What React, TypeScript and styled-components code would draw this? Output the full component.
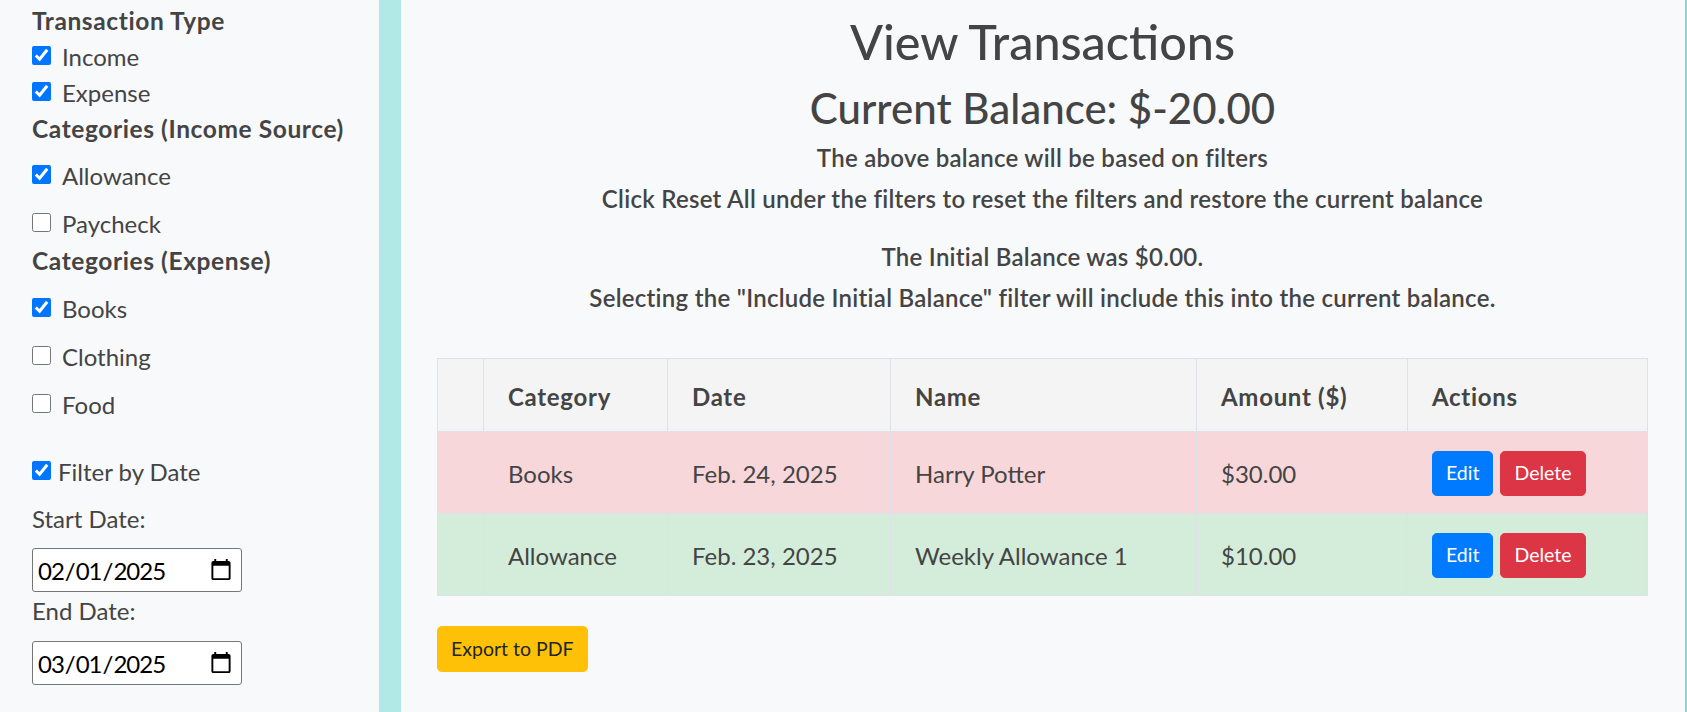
import React from "react";
import styled, { createGlobalStyle } from "styled-components";

const GlobalStyle = createGlobalStyle`
  html, body { margin: 0; padding: 0; }
  body {
    background: #b1e8e5;
    font-family: Lato, "Open Sans", sans-serif;
    color: #444;
  }
  * { box-sizing: border-box; }
`;

const Page = styled.div`
  display: flex;
  gap: 22px;
  height: 712px;
  overflow: hidden;
  padding-right: 3px;
  background: linear-gradient(to right, #b2e9e6 0%, #b0e8e5 40%, #84dad9 100%);
`;

const Sidebar = styled.aside`
  width: 379px;
  flex: none;
  background: #f8f9fa;
  padding-left: 32px;
  display: flex;
  flex-direction: column;
`;

const GroupTitle = styled.div<{ $h: number; $mt?: number }>`
  height: ${(p) => p.$h}px;
  margin-top: ${(p) => p.$mt ?? 0}px;
  display: flex;
  align-items: center;
  font-size: 24.5px;
  line-height: 28.8px;
  font-weight: 700;
  letter-spacing: 0.6px;
  white-space: nowrap;
  color: #444;
`;

const CheckRow = styled.label<{ $h: number; $mt?: number; $gap?: number }>`
  height: ${(p) => p.$h}px;
  margin-top: ${(p) => p.$mt ?? 0}px;
  display: flex;
  align-items: center;
  gap: ${(p) => p.$gap ?? 11}px;
  font-size: 24px;
  line-height: 28.8px;
  color: #444;
`;

const Box = styled.input.attrs({ type: "checkbox" })`
  width: 19px;
  height: 19px;
  margin: -3px 0 0 0;
  flex: none;
`;

const FieldLabel = styled.div<{ $h: number }>`
  height: ${(p) => p.$h}px;
  display: flex;
  align-items: center;
  font-size: 24px;
  line-height: 28.8px;
  color: #444;
`;

const DateField = styled.input.attrs({ type: "date" })<{ $mt: number }>`
  width: 210px;
  height: 44px;
  margin-top: ${(p) => p.$mt}px;
  border: 1px solid #767676;
  border-radius: 3px;
  background: #fff;
  color: #000;
  padding: 0 6px 0 4px;
  font-family: Lato, "Open Sans", sans-serif;
  font-size: 24px;
  letter-spacing: -1px;
  flex: none;
`;

const Main = styled.main`
  flex: 1;
  background: #f8f9fa;
  padding: 0 37px 0 36px;
  text-align: center;
`;

const Title = styled.h1`
  margin: 12.6px 0 14px;
  font-size: 48.5px;
  line-height: 57.6px;
  font-weight: 500;
  color: #444;
`;

const Balance = styled.h2`
  margin: 0 0 12px;
  font-size: 42px;
  line-height: 48px;
  font-weight: 500;
  color: #444;
`;

const Note = styled.h5`
  margin: 0 0 12px;
  font-size: 24px;
  line-height: 28.8px;
  font-weight: 600;
  letter-spacing: 0.27px;
  color: #444;
`;

const NoteGroup = styled.div<{ $pt?: number }>`
  padding-top: ${(p) => p.$pt ?? 0}px;
`;

const Table = styled.table`
  margin-top: 46px;
  width: 1210px;
  table-layout: fixed;
  border-collapse: collapse;
  text-align: left;
  font-size: 24px;
  color: #444;
`;

const HeadCell = styled.th`
  background: #f4f4f4;
  border: 1px solid #dee2e6;
  padding: 20px 24px 16px;
  line-height: 36px;
  font-weight: 700;
  letter-spacing: 0.7px;
`;

const Row = styled.tr<{ $tone: "danger" | "success" }>`
  background: ${(p) => (p.$tone === "danger" ? "#f8d7da" : "#d4edda")};
`;

const Cell = styled.td`
  border: 1px solid #dee2e6;
  padding: 19px 24px 17px;
  line-height: 36px;
  height: 82px;
`;

const Actions = styled.div`
  display: flex;
  gap: 7px;
  margin-top: -1px;
`;

const Btn = styled.button<{ $variant: "primary" | "danger" | "warning" }>`
  font-family: Lato, "Open Sans", sans-serif;
  font-size: 19.5px;
  line-height: 28.8px;
  padding: 7.2px 13px;
  border-radius: 4.8px;
  border: 1px solid
    ${(p) => (p.$variant === "primary" ? "#007bff" : p.$variant === "danger" ? "#dc3545" : "#ffc107")};
  background: ${(p) => (p.$variant === "primary" ? "#007bff" : p.$variant === "danger" ? "#dc3545" : "#ffc107")};
  color: ${(p) => (p.$variant === "warning" ? "#212529" : "#fff")};
  cursor: pointer;
`;

const Footer = styled.div`
  margin-top: 30px;
  text-align: left;
`;

const rows = [
  { tone: "danger" as const, category: "Books", date: "Feb. 24, 2025", name: "Harry Potter", amount: "$30.00" },
  { tone: "success" as const, category: "Allowance", date: "Feb. 23, 2025", name: "Weekly Allowance 1", amount: "$10.00" },
];

export default function App() {
  return (
    <>
      <GlobalStyle />
      <Page>
        <Sidebar>
          <GroupTitle $h={35} $mt={4}>Transaction Type</GroupTitle>
          <CheckRow $h={36}><Box defaultChecked />Income</CheckRow>
          <CheckRow $h={36}><Box defaultChecked />Expense</CheckRow>
          <GroupTitle $h={36}>Categories (Income Source)</GroupTitle>
          <CheckRow $h={48} $mt={5}><Box defaultChecked />Allowance</CheckRow>
          <CheckRow $h={48}><Box />Paycheck</CheckRow>
          <GroupTitle $h={26}>Categories (Expense)</GroupTitle>
          <CheckRow $h={48} $mt={11}><Box defaultChecked />Books</CheckRow>
          <CheckRow $h={48}><Box />Clothing</CheckRow>
          <CheckRow $h={48}><Box />Food</CheckRow>
          <CheckRow $h={48} $mt={19} $gap={7}><Box defaultChecked />Filter by Date</CheckRow>
          <FieldLabel $h={46}>Start Date:</FieldLabel>
          <DateField $mt={6} defaultValue="2025-02-01" />
          <FieldLabel $h={39}>End Date:</FieldLabel>
          <DateField $mt={10} defaultValue="2025-03-01" />
        </Sidebar>
        <Main>
          <Title>View Transactions</Title>
          <Balance>Current Balance: $-20.00</Balance>
          <NoteGroup>
            <Note>The above balance will be based on filters</Note>
            <Note>Click Reset All under the filters to reset the filters and restore the current balance</Note>
          </NoteGroup>
          <NoteGroup $pt={17}>
            <Note>The Initial Balance was $0.00.</Note>
            <Note>Selecting the "Include Initial Balance" filter will include this into the current balance.</Note>
          </NoteGroup>
          <Table>
            <colgroup>
              <col style={{ width: 46 }} />
              <col style={{ width: 184 }} />
              <col style={{ width: 223 }} />
              <col style={{ width: 306 }} />
              <col style={{ width: 211 }} />
              <col style={{ width: 240 }} />
            </colgroup>
            <thead>
              <tr>
                <HeadCell />
                <HeadCell>Category</HeadCell>
                <HeadCell>Date</HeadCell>
                <HeadCell>Name</HeadCell>
                <HeadCell>Amount ($)</HeadCell>
                <HeadCell>Actions</HeadCell>
              </tr>
            </thead>
            <tbody>
              {rows.map((r) => (
                <Row key={r.name} $tone={r.tone}>
                  <Cell />
                  <Cell>{r.category}</Cell>
                  <Cell>{r.date}</Cell>
                  <Cell>{r.name}</Cell>
                  <Cell>{r.amount}</Cell>
                  <Cell>
                    <Actions>
                      <Btn $variant="primary">Edit</Btn>
                      <Btn $variant="danger">Delete</Btn>
                    </Actions>
                  </Cell>
                </Row>
              ))}
            </tbody>
          </Table>
          <Footer>
            <Btn $variant="warning">Export to PDF</Btn>
          </Footer>
        </Main>
      </Page>
    </>
  );
}
